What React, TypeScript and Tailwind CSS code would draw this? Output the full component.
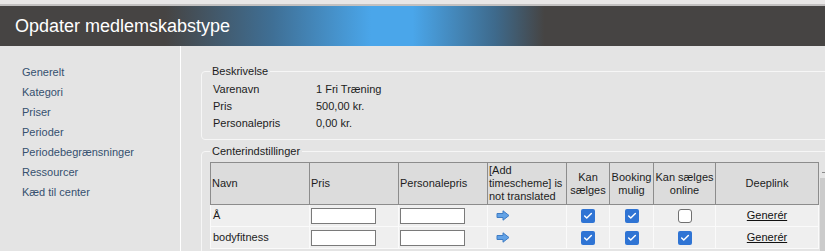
import { Check } from 'lucide-react';

const navItems = ['Generelt', 'Kategori', 'Priser', 'Perioder', 'Periodebegrænsninger', 'Ressourcer', 'Kæd til center'];

const centers = [
  { name: 'Å', sell: true, booking: true, online: false },
  { name: 'bodyfitness', sell: true, booking: true, online: true },
];

function Box({ checked }: { checked: boolean }) {
  return checked ? (
    <span className="inline-flex h-[14px] w-[14px] items-center justify-center rounded-[2px] bg-[#2f74d4]">
      <Check className="h-[10px] w-[10px] text-white" strokeWidth={3.5} />
    </span>
  ) : (
    <span className="inline-block h-[14px] w-[14px] rounded-[3px] border border-[#707070] bg-white" />
  );
}

function Arrow() {
  return (
    <svg width="14" height="11" viewBox="0 0 14 11" className="ml-[8px] block">
      <path d="M1 3.5 H7 V0.8 L13 5.5 L7 10.2 V7.5 H1 Z" fill="#62a2e6" stroke="#3f7cc4" strokeWidth="1" strokeLinejoin="round" />
    </svg>
  );
}

export default function App() {
  return (
    <div className="relative h-[251px] w-[825px] overflow-hidden bg-[#e4e4e4] font-['Liberation_Sans',Tahoma,sans-serif] text-[11px] text-[#1c1c1c]">
      <div className="h-[4px] bg-[#e8e6e6]" />
      <div className="h-[2px] bg-[#c2c0c0]" />
      <div className="flex h-[40px] items-center bg-[linear-gradient(to_right,#464443_0%,#464443_20%,#3f6f95_33%,#4aa6ea_45%,#4aa6ea_50%,#3e6a8c_60%,#464443_66%,#464443_100%)] pl-[15px] text-[18px] text-white">
        Opdater medlemskabstype
      </div>

      <div className="flex h-[205px]">
        <nav className="w-[181px] shrink-0 border-r border-white pt-[16px] pl-[22px] text-[#35506f]">
          {navItems.map(item => (
            <div key={item} className="h-[20px] leading-[20px]">{item}</div>
          ))}
        </nav>

        <main className="min-w-0 flex-1 pl-[20px]">
          <fieldset className="mt-[19px] w-[700px] rounded-[4px] border border-[#f6f6f6] pb-[7px]">
            <legend className="ml-[8px] px-[2px] leading-[13px]">Beskrivelse</legend>
            <div className="pt-[3px] pl-[11px]">
              <div className="flex h-[17px] items-center"><span className="w-[103px]">Varenavn</span><span>1 Fri Træning</span></div>
              <div className="flex h-[17px] items-center"><span className="w-[103px]">Pris</span><span>500,00 kr.</span></div>
              <div className="flex h-[17px] items-center"><span className="w-[103px]">Personalepris</span><span>0,00 kr.</span></div>
            </div>
          </fieldset>

          <fieldset className="mt-[5px] w-[700px] rounded-[4px] border border-[#f6f6f6] pb-[10px]">
            <legend className="ml-[8px] px-[2px] leading-[13px]">Centerindstillinger</legend>
            <table className="mt-[4px] ml-[8px] w-[608px] table-fixed border-collapse">
              <colgroup>
                <col className="w-[99px]" />
                <col className="w-[89px]" />
                <col className="w-[89px]" />
                <col className="w-[79px]" />
                <col className="w-[43px]" />
                <col className="w-[44px]" />
                <col className="w-[62px]" />
                <col className="w-[103px]" />
              </colgroup>
              <thead>
                <tr className="h-[42px] bg-[#dcdcdc] leading-[13px]">
                  <th className="border border-[#8c8c8c] px-[1px] text-left font-normal">Navn</th>
                  <th className="border border-[#8c8c8c] px-[1px] text-left font-normal">Pris</th>
                  <th className="border border-[#8c8c8c] px-[1px] text-left font-normal">Personalepris</th>
                  <th className="border border-[#8c8c8c] px-[1px] text-left font-normal">[Add timescheme] is not translated</th>
                  <th className="border border-[#8c8c8c] px-[1px] text-center font-normal">Kan sælges</th>
                  <th className="border border-[#8c8c8c] px-[1px] text-center font-normal">Booking mulig</th>
                  <th className="border border-[#8c8c8c] px-[1px] text-center font-normal">Kan sælges online</th>
                  <th className="border border-[#8c8c8c] px-[1px] text-center font-normal">Deeplink</th>
                </tr>
              </thead>
              <tbody>
                {centers.map(c => (
                  <tr key={c.name} className="h-[22px] bg-[#efefef]">
                    <td className="border border-[#fafafa] px-[2px]">{c.name}</td>
                    <td className="border border-[#fafafa] px-[1px]">
                      <input className="block h-[16px] w-[65px] border border-[#7a7a7a] bg-white" />
                    </td>
                    <td className="border border-[#fafafa] px-[1px]">
                      <input className="block h-[16px] w-[65px] border border-[#7a7a7a] bg-white" />
                    </td>
                    <td className="border border-[#fafafa]"><Arrow /></td>
                    <td className="border border-[#fafafa] text-center"><div className="flex justify-center"><Box checked={c.sell} /></div></td>
                    <td className="border border-[#fafafa] text-center"><div className="flex justify-center"><Box checked={c.booking} /></div></td>
                    <td className="border border-[#fafafa] text-center"><div className="flex justify-center"><Box checked={c.online} /></div></td>
                    <td className="border border-[#fafafa] text-center">
                      <a href="#" className="text-[#111] underline">Generér</a>
                    </td>
                  </tr>
                ))}
              </tbody>
            </table>
          </fieldset>
        </main>
      </div>

      {/* inner scrollbar at the right edge */}
      <div className="absolute top-[172px] right-0 h-[1px] w-[3px] bg-[#8a8a8a]" />
      <div className="absolute top-[178px] right-0 bottom-0 w-[5px] bg-[#cbcbcb]" />
    </div>
  );
}
